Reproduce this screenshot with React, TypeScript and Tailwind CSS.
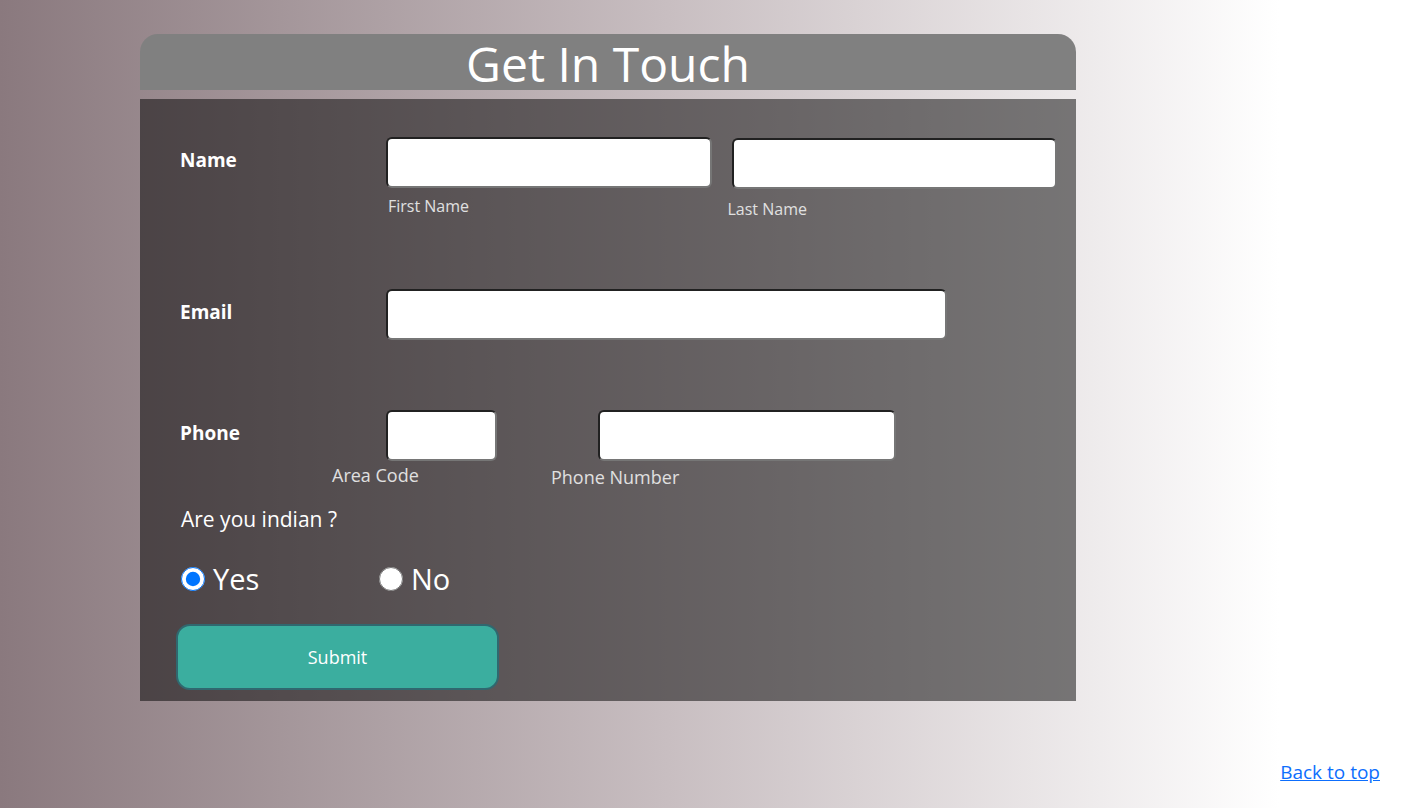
const field =
  'h-[51px] min-w-0 rounded-md border-2 border-t-[#212121] border-l-[#212121] border-r-[#767676] border-b-[#767676] bg-white px-2 text-xl text-gray-900';

const rowLabel = 'w-[206px] shrink-0 pt-2 text-[19px] leading-[30px] font-bold';

export default function App() {
  return (
    <div
      id="top"
      className="flex min-h-screen flex-col bg-[linear-gradient(90deg,#8a797e_0%,#c8bec1_47%,#ffffff_90%)] pt-[34px] font-['Comic_Sans_MS','Open_Sans',sans-serif] font-medium text-white"
    >
      <main className="ml-[140px] max-w-[936px]">
        <h1 className="h-14 rounded-t-[18px] bg-[#808080] text-center text-[48px] leading-[60px] font-medium">
          Get In Touch
        </h1>

        <form
          className="mt-[9px] bg-black/50 pt-[38px] pr-[19px] pb-[11px] pl-10"
          onSubmit={(event) => event.preventDefault()}
        >
          <div className="flex h-[152px]">
            <label htmlFor="first-name" className={rowLabel}>
              Name
            </label>
            <div className="flex min-w-0 flex-1 gap-5">
              <div className="flex min-w-0 flex-1 flex-col">
                <input id="first-name" type="text" className={field} />
                <label htmlFor="first-name" className="mt-1.5 pl-[2px] text-[16px] leading-6 text-[#e0e0e0]">
                  First Name
                </label>
              </div>
              <div className="flex min-w-0 flex-1 flex-col pt-px">
                <input id="last-name" type="text" className={field} />
                <label htmlFor="last-name" className="-ml-1 mt-2 text-[16px] leading-6 text-[#e0e0e0]">
                  Last Name
                </label>
              </div>
            </div>
          </div>

          <div className="flex h-[121px]">
            <label htmlFor="email" className={rowLabel}>
              Email
            </label>
            <input id="email" type="email" className={`${field} max-w-[561px] flex-1`} />
          </div>

          <div className="flex">
            <label htmlFor="area-code" className={rowLabel}>
              Phone
            </label>
            <input id="area-code" type="text" className={`${field} w-[111px]`} />
            <input id="phone-number" type="tel" className={`${field} ml-[101px] max-w-[298px] flex-1`} />
          </div>
          <div className="flex pl-[152px] text-[18px] leading-7 text-[#e0e0e0]">
            <label htmlFor="area-code" className="w-[219px]">
              Area Code
            </label>
            <label htmlFor="phone-number" className="pt-0.5">
              Phone Number
            </label>
          </div>

          <fieldset className="mt-3 pl-px">
            <legend className="text-[21px] leading-8">Are you indian ?</legend>
            <div className="mt-5 flex h-12 items-center text-[29px]">
              <label className="flex w-[198px] items-center gap-2">
                <input type="radio" name="indian" value="yes" defaultChecked className="size-6 accent-[#0075ff]" />
                Yes
              </label>
              <label className="flex items-center gap-2">
                <input type="radio" name="indian" value="no" className="size-6 accent-[#0075ff]" />
                No
              </label>
            </div>
          </fieldset>

          <button
            type="submit"
            className="-ml-1 mt-[21px] block h-[66px] w-[323px] rounded-[14px] border-2 border-[#30686f] bg-[#3bae9f] text-[18px]"
          >
            Submit
          </button>
        </form>
      </main>

      <a href="#top" className="mt-auto mr-[41px] mb-[22px] self-end text-[19px] leading-7 font-normal text-[#0d6efd] underline">
        Back to top
      </a>
    </div>
  );
}
